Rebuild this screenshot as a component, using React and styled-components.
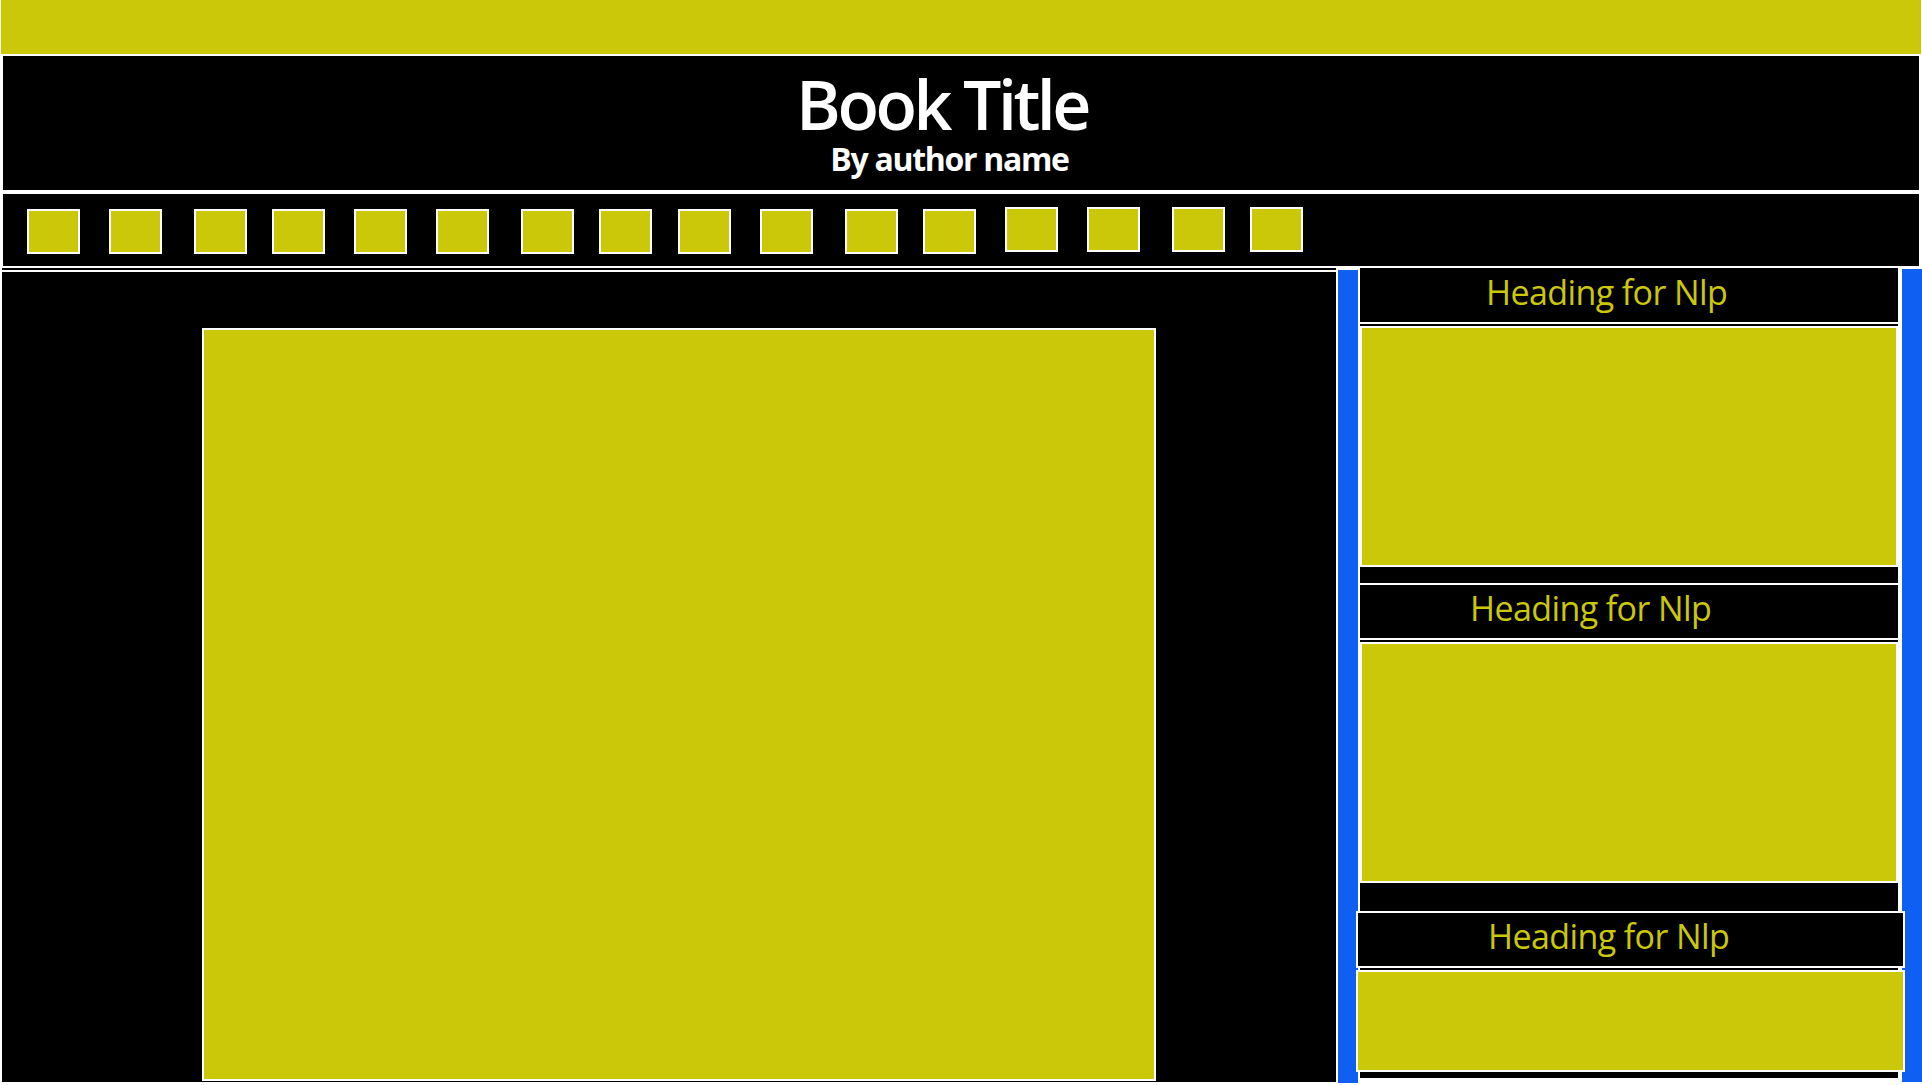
import styled, { createGlobalStyle } from "styled-components";

const yellow = "#cac808";
const blue = "#0f5ff2";
const white = "#ffffff";
const black = "#000000";

const GlobalStyle = createGlobalStyle`
  html, body {
    margin: 0;
    padding: 0;
    background: ${white};
    overflow: hidden;
  }

  body {
    font-family: "Open Sans", "Noto Sans", Arial, sans-serif;
  }
`;

// x offset between thumbnails, measured from the mockup
const thumbs = [
  { gap: 24 },
  { gap: 29 },
  { gap: 32 },
  { gap: 25 },
  { gap: 29 },
  { gap: 29 },
  { gap: 32 },
  { gap: 25 },
  { gap: 26 },
  { gap: 29 },
  { gap: 32 },
  { gap: 25 },
  { gap: 29, raised: true },
  { gap: 29, raised: true },
  { gap: 32, raised: true },
  { gap: 25, raised: true },
];

const sections = [
  { indent: 126, topBorder: false, headHeight: 56, imageHeight: 241, after: 16 },
  { indent: 110, topBorder: true, headHeight: 57, imageHeight: 241, after: 28 },
  { indent: 130, topBorder: true, headHeight: 57, imageHeight: 102, after: 6, wide: true },
];

const App = () => {
  return (
    <Page>
      <GlobalStyle />
      <TopBar />
      <Header>
        <Title>Book Title</Title>
        <Author>By author name</Author>
      </Header>
      <Nav>
        {thumbs.map((t, i) => (
          <Thumb key={i} $gap={t.gap} $raised={t.raised} />
        ))}
      </Nav>
      <Main>
        <Stage>
          <Cover />
        </Stage>
        <Rail $top={2} $height={813} />
        <Sidebar>
          {sections.map((s, i) => (
            <Section key={i} $after={s.after}>
              <SectionHead
                $indent={s.indent}
                $topBorder={s.topBorder}
                $height={s.headHeight}
                $wide={s.wide}
              >
                Heading for Nlp
              </SectionHead>
              <SectionImage $height={s.imageHeight} $wide={s.wide} />
            </Section>
          ))}
        </Sidebar>
        <Rail $top={1} $height={813} />
      </Main>
    </Page>
  );
};

const Page = styled.div`
  width: 1922px;
  height: 1085px;
  overflow: hidden;
`;

const TopBar = styled.div`
  height: 54px;
  margin: 0 1px 2px 1px;
  background: ${yellow};
`;

const Header = styled.header`
  height: 134px;
  margin: 0 3px 4px 3px;
  padding-top: 14px;
  box-sizing: border-box;
  background: ${black};
  color: ${white};
  text-align: center;
`;

const Title = styled.h1`
  margin: 0;
  padding-right: 38px;
  font-size: 68px;
  line-height: 68px;
  font-weight: 600;
  letter-spacing: -3.5px;
`;

const Author = styled.p`
  margin: 5px 0 0;
  padding-right: 23px;
  font-size: 32px;
  line-height: 32px;
  font-weight: 700;
  letter-spacing: -1.3px;
`;

const Nav = styled.nav`
  display: flex;
  align-items: flex-start;
  height: 57px;
  margin: 0 3px;
  padding-top: 15px;
  background: ${black};
  border-bottom: 2px solid ${white};
`;

const Thumb = styled.div`
  flex: none;
  width: 53px;
  height: 45px;
  box-sizing: border-box;
  margin-left: ${(p) => p.$gap}px;
  margin-top: ${(p) => (p.$raised ? -2 : 0)}px;
  background: ${yellow};
  border: 2px solid ${white};
`;

const Main = styled.main`
  display: flex;
  align-items: flex-start;
  margin-left: 2px;
`;

const Stage = styled.section`
  flex: none;
  width: 1334px;
  padding: 58px 0 1px 200px;
  box-sizing: border-box;
  background: ${black};
  border-top: 2px solid ${black};
  box-shadow: inset 0 2px 0 ${white};
`;

const Cover = styled.div`
  width: 954px;
  height: 753px;
  box-sizing: border-box;
  background: ${yellow};
  border: 2px solid ${white};
`;

const Rail = styled.div`
  flex: none;
  width: 20px;
  height: ${(p) => p.$height}px;
  margin-top: ${(p) => p.$top}px;
  margin-left: 2px;
  background: ${blue};

  & + & {
    margin-left: 0;
  }
`;

const Sidebar = styled.aside`
  flex: none;
  width: 542px;
  box-sizing: border-box;
  display: flex;
  flex-direction: column;
  background: ${black};
  border-left: 2px solid ${white};
  border-right: 2px solid ${white};
`;

const Section = styled.div`
  display: flex;
  flex-direction: column;
  gap: 2px;
  margin-bottom: ${(p) => p.$after}px;
`;

const SectionHead = styled.h2`
  position: ${(p) => (p.$wide ? "relative" : "static")};
  margin: ${(p) => (p.$wide ? "0 -7px 0 -4px" : "0")};
  height: ${(p) => p.$height}px;
  padding: ${(p) => (p.$topBorder ? 6 : 7)}px 0 0 ${(p) => p.$indent}px;
  box-sizing: border-box;
  background: ${black};
  color: ${yellow};
  border-top: ${(p) => (p.$topBorder ? `2px solid ${white}` : "none")};
  border-bottom: 2px solid ${white};
  border-left: ${(p) => (p.$wide ? `2px solid ${white}` : "none")};
  border-right: ${(p) => (p.$wide ? `2px solid ${white}` : "none")};
  font-size: 34px;
  line-height: 34px;
  font-weight: 400;
  letter-spacing: -0.6px;
  white-space: nowrap;
`;

const SectionImage = styled.div`
  position: ${(p) => (p.$wide ? "relative" : "static")};
  margin: ${(p) => (p.$wide ? "0 -7px 0 -4px" : "0")};
  height: ${(p) => p.$height}px;
  box-sizing: border-box;
  background: ${yellow};
  border: 2px solid ${white};
`;

export default App;
